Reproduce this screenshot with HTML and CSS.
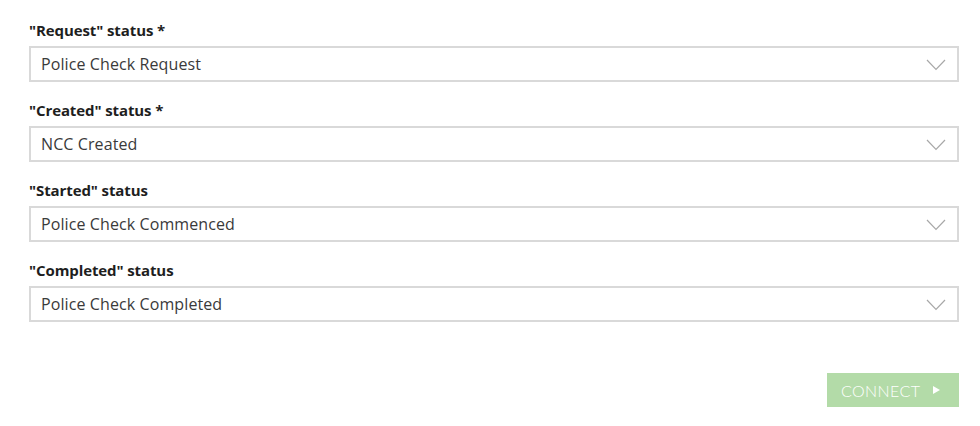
FILE: index.html
```html
<!DOCTYPE html>
<html>
<head>
<meta charset="utf-8">
<link rel="stylesheet" href="styles.css">
</head>
<body>
<form class="form">
  <div class="field">
    <label class="label">"Request" status *</label>
    <div class="select"><span>Police Check Request</span><svg class="chev" width="20" height="12" viewBox="0 0 20 12"><path d="M1 1 L10 10.5 L19 1" fill="none" stroke="#a8a8a8" stroke-width="1.2"/></svg></div>
  </div>
  <div class="field">
    <label class="label">"Created" status *</label>
    <div class="select"><span>NCC Created</span><svg class="chev" width="20" height="12" viewBox="0 0 20 12"><path d="M1 1 L10 10.5 L19 1" fill="none" stroke="#a8a8a8" stroke-width="1.2"/></svg></div>
  </div>
  <div class="field">
    <label class="label">"Started" status</label>
    <div class="select"><span>Police Check Commenced</span><svg class="chev" width="20" height="12" viewBox="0 0 20 12"><path d="M1 1 L10 10.5 L19 1" fill="none" stroke="#a8a8a8" stroke-width="1.2"/></svg></div>
  </div>
  <div class="field">
    <label class="label">"Completed" status</label>
    <div class="select"><span>Police Check Completed</span><svg class="chev" width="20" height="12" viewBox="0 0 20 12"><path d="M1 1 L10 10.5 L19 1" fill="none" stroke="#a8a8a8" stroke-width="1.2"/></svg></div>
  </div>
  <div class="actions">
    <button type="button" class="btn">CONNECT <svg class="tri" width="7" height="8" viewBox="0 0 7 8"><path d="M0 0 L7 4 L0 8 Z" fill="#fff"/></svg></button>
  </div>
</form>
</body>
</html>
```
FILE: styles.css
```css
html, body {
  margin: 0;
  padding: 0;
  background: #fff;
}
body {
  font-family: "Open Sans", "Lato", sans-serif;
  color: #222;
}
.form {
  padding: 20px 21px 0 29px;
  display: flex;
  flex-direction: column;
}
.field {
  display: flex;
  flex-direction: column;
  gap: 6px;
  margin-bottom: 18px;
}
.label {
  font-size: 15px;
  font-weight: 700;
  line-height: 20px;
  color: #1e1e1e;
  letter-spacing: -0.1px;
}
.select {
  height: 36px;
  box-sizing: border-box;
  border: 2px solid #d9d9d9;
  display: flex;
  align-items: center;
  justify-content: space-between;
  padding: 0 11px 0 10px;
  font-size: 16px;
  letter-spacing: 0.1px;
  color: #3a3a3a;
}
.chev {
  display: block;
  margin-top: 1px;
}
.actions {
  display: flex;
  justify-content: flex-end;
  margin-top: 33px;
}
.btn {
  width: 132px;
  height: 34px;
  border: 0;
  background: #b3dba8;
  color: #fff;
  font-family: "Lato", "Open Sans", sans-serif;
  font-size: 16px;
  font-weight: 300;
  letter-spacing: 0.4px;
  display: flex;
  align-items: center;
  padding: 0 0 0 14px;
  gap: 13px;
}
.tri {
  display: block;
}
```
